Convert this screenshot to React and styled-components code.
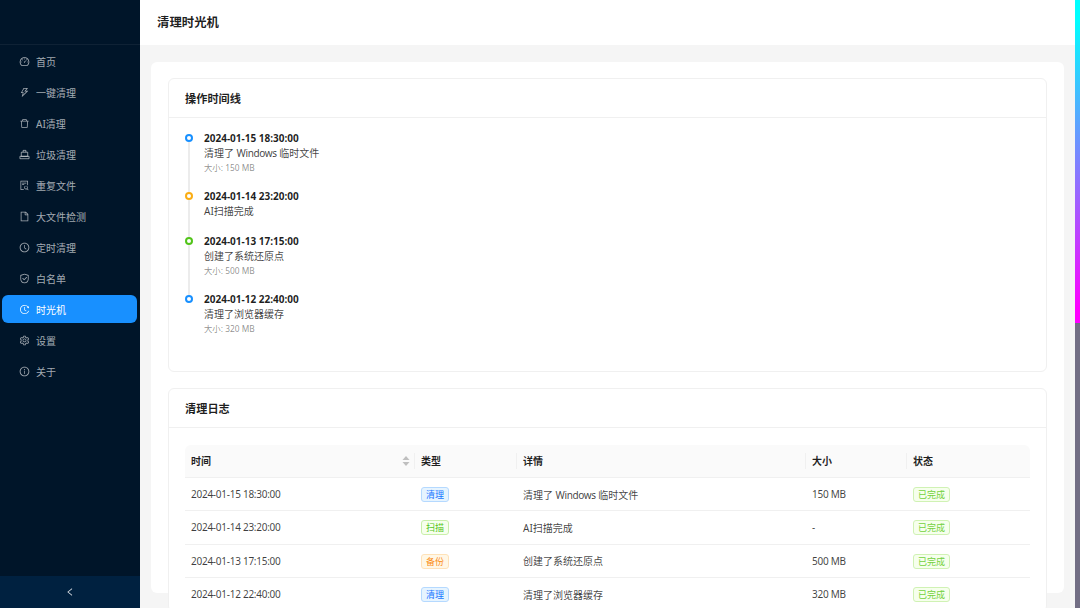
import React from "react";
import styled, { createGlobalStyle } from "styled-components";
import {
  AiOutlineDashboard,
  AiOutlineThunderbolt,
  AiOutlineDelete,
  AiOutlineFileSearch,
  AiOutlineFile,
  AiOutlineClockCircle,
  AiOutlineSafety,
  AiOutlineHistory,
  AiOutlineSetting,
  AiOutlineInfoCircle,
  AiOutlineLeft,
} from "react-icons/ai";

const GlobalStyle = createGlobalStyle`
  html, body {
    margin: 0;
    padding: 0;
    height: 100%;
    overflow: hidden;
  }
  body {
    font-family: "Noto Sans", "Noto Sans CJK SC", sans-serif;
    font-size: 10px;
    color: rgba(0, 0, 0, 0.88);
    background: #f5f5f5;
  }
`;

const Shell = styled.div`
  display: flex;
  width: 1080px;
  height: 608px;
  overflow: hidden;
`;

const Sidebar = styled.aside`
  width: 140px;
  flex: none;
  display: flex;
  flex-direction: column;
  background: #001529;
`;

const LogoArea = styled.div`
  height: 44px;
  border-bottom: 1px solid rgba(255, 255, 255, 0.06);
`;

const Menu = styled.nav`
  flex: 1;
  display: flex;
  flex-direction: column;
  gap: 3px;
  padding: 2px 3px 0 2px;
`;

const MenuItem = styled.div`
  height: 28px;
  display: flex;
  align-items: center;
  gap: 6px;
  padding-left: 17px;
  border-radius: 6px;
  font-size: 10px;
  color: ${(props) => (props.$active ? "#fff" : "rgba(255, 255, 255, 0.65)")};
  background: ${(props) => (props.$active ? "#1890ff" : "transparent")};
  svg {
    width: 11px;
    height: 11px;
    flex: none;
  }
`;

const Collapse = styled.div`
  height: 32px;
  display: flex;
  align-items: center;
  justify-content: center;
  background: #002140;
  color: rgba(255, 255, 255, 0.85);
  svg {
    width: 10px;
    height: 10px;
  }
`;

const Main = styled.main`
  flex: 1;
  min-width: 0;
  display: flex;
  flex-direction: column;
`;

const Header = styled.header`
  height: 45px;
  flex: none;
  display: flex;
  align-items: center;
  padding: 0 0 1px 17px;
  box-sizing: border-box;
  background: #fff;
  font-size: 12.4px;
  font-weight: 600;
`;

const Content = styled.div`
  flex: 1;
  padding: 17px 11px 15px;
`;

const Panel = styled.div`
  height: 531px;
  box-sizing: border-box;
  padding: 16px 17px 0;
  display: flex;
  flex-direction: column;
  gap: 16px;
  background: #fff;
  border-radius: 6px;
`;

const Card = styled.section`
  flex: none;
  background: #fff;
  border: 1px solid #f0f0f0;
  border-radius: 6px;
`;

const CardTitle = styled.h2`
  margin: 0;
  height: 38px;
  display: flex;
  align-items: center;
  padding-left: 16px;
  border-bottom: 1px solid #f0f0f0;
  font-size: 11.2px;
  font-weight: 600;
`;

const TimelineBody = styled.div`
  height: 253px;
  box-sizing: border-box;
  padding: 13px 16px 0;
`;

const TimelineRow = styled.div`
  position: relative;
  padding: 0 0 15px 19px;
  &::before {
    content: "";
    display: ${(props) => (props.$last ? "none" : "block")};
    position: absolute;
    left: 3px;
    top: 11px;
    bottom: -3px;
    width: 2px;
    background: #ececec;
  }
`;

const Dot = styled.span`
  position: absolute;
  left: 0;
  top: 3px;
  width: 8px;
  height: 8px;
  box-sizing: border-box;
  border-radius: 50%;
  background: #fff;
  border: 2px solid ${(props) => props.$color};
`;

const EventTime = styled.div`
  height: 15px;
  line-height: 15px;
  font-weight: 700;
`;

const EventText = styled.div`
  height: 15px;
  line-height: 15px;
  color: rgba(0, 0, 0, 0.75);
`;

const EventSize = styled.div`
  height: 13px;
  line-height: 13px;
  font-size: 8.4px;
  color: rgba(0, 0, 0, 0.45);
`;

const Latin = styled.span`
  letter-spacing: -0.4px;
`;

const TableBody = styled.div`
  padding: 17px 16px 0;
`;

const Table = styled.table`
  width: 845px;
  table-layout: fixed;
  border-collapse: separate;
  border-spacing: 0;
`;

const Th = styled.th`
  position: relative;
  height: 30px;
  padding: 0 6px 2px;
  text-align: left;
  font-weight: 600;
  background: #fafafa;
  border-bottom: 1px solid #f0f0f0;
  &:first-child {
    border-top-left-radius: 6px;
  }
  &:last-child {
    border-top-right-radius: 6px;
  }
  &:not(:last-child)::after {
    content: "";
    position: absolute;
    right: 0;
    top: 8px;
    height: 16px;
    width: 1px;
    background: #f0f0f0;
  }
`;

const SortIcon = styled.svg`
  position: absolute;
  right: 5px;
  top: 10px;
  width: 8px;
  height: 12px;
  fill: #bfbfbf;
`;

const Td = styled.td`
  height: 33.33px;
  box-sizing: border-box;
  padding: 0 6px;
  color: rgba(0, 0, 0, 0.75);
  border-bottom: 1px solid #f0f0f0;
  letter-spacing: ${(props) => (props.$tight ? "-0.26px" : "normal")};
`;

const tagColors = {
  blue: ["#e6f4ff", "#b5d9ff", "#1677ff"],
  green: ["#f6ffed", "#c9efaa", "#52c41a"],
  done: ["#f6ffed", "#d0f2b4", "#73d13d"],
  orange: ["#fff7e6", "#ffe2b8", "#fa8c16"],
};

const Tag = styled.span`
  display: inline-block;
  box-sizing: border-box;
  height: 15px;
  line-height: 13px;
  padding: 0 4px;
  font-size: 9px;
  vertical-align: middle;
  border-radius: 3px;
  background: ${(props) => tagColors[props.$tone][0]};
  border: 1px solid ${(props) => tagColors[props.$tone][1]};
  color: ${(props) => tagColors[props.$tone][2]};
`;

const Scrollbar = styled.div`
  width: 5px;
  flex: none;
  background: #726e84;
`;

const ScrollThumb = styled.div`
  height: 323px;
  background: linear-gradient(180deg, #00ffff 0%, #00ffff 6%, #ff00ff 96%);
`;

const RestIcon = () => (
  <svg viewBox="0 0 12 12" fill="none" stroke="currentColor" strokeWidth="0.9">
    <path d="M4.5 3.5V1.5h3v2" />
    <path d="M2.5 3.5h7v4.5h-7z" />
    <path d="M1 8h10v2.6H1z" />
  </svg>
);

const menuItems = [
  ["首页", AiOutlineDashboard],
  ["一键清理", AiOutlineThunderbolt],
  ["AI清理", AiOutlineDelete],
  ["垃圾清理", RestIcon],
  ["重复文件", AiOutlineFileSearch],
  ["大文件检测", AiOutlineFile],
  ["定时清理", AiOutlineClockCircle],
  ["白名单", AiOutlineSafety],
  ["时光机", AiOutlineHistory, true],
  ["设置", AiOutlineSetting],
  ["关于", AiOutlineInfoCircle],
];

const windowsText = (
  <>
    清理了 <Latin>Windows</Latin> 临时文件
  </>
);

const events = [
  { time: "2024-01-15 18:30:00", text: windowsText, size: "大小: 150 MB", color: "#1890ff" },
  { time: "2024-01-14 23:20:00", text: "AI扫描完成", color: "#faad14" },
  { time: "2024-01-13 17:15:00", text: "创建了系统还原点", size: "大小: 500 MB", color: "#52c41a" },
  { time: "2024-01-12 22:40:00", text: "清理了浏览器缓存", size: "大小: 320 MB", color: "#1890ff" },
];

const logs = [
  { time: "2024-01-15 18:30:00", type: "清理", tone: "blue", detail: windowsText, size: "150 MB" },
  { time: "2024-01-14 23:20:00", type: "扫描", tone: "green", detail: "AI扫描完成", size: "-" },
  { time: "2024-01-13 17:15:00", type: "备份", tone: "orange", detail: "创建了系统还原点", size: "500 MB" },
  { time: "2024-01-12 22:40:00", type: "清理", tone: "blue", detail: "清理了浏览器缓存", size: "320 MB" },
];

export default function App() {
  return (
    <Shell>
      <GlobalStyle />
      <Sidebar>
        <LogoArea />
        <Menu>
          {menuItems.map(([label, Icon, active]) => (
            <MenuItem key={label} $active={active}>
              <Icon />
              {label}
            </MenuItem>
          ))}
        </Menu>
        <Collapse>
          <AiOutlineLeft />
        </Collapse>
      </Sidebar>
      <Main>
        <Header>清理时光机</Header>
        <Content>
          <Panel>
            <Card>
              <CardTitle>操作时间线</CardTitle>
              <TimelineBody>
                {events.map((e, i) => (
                  <TimelineRow key={e.time} $last={i === events.length - 1}>
                    <Dot $color={e.color} />
                    <EventTime>{e.time}</EventTime>
                    <EventText>{e.text}</EventText>
                    {e.size && <EventSize>{e.size}</EventSize>}
                  </TimelineRow>
                ))}
              </TimelineBody>
            </Card>
            <Card>
              <CardTitle>清理日志</CardTitle>
              <TableBody>
                <Table>
                  <colgroup>
                    <col width="230" />
                    <col width="102" />
                    <col width="289" />
                    <col width="101" />
                    <col width="123" />
                  </colgroup>
                  <thead>
                    <tr>
                      <Th>
                        时间
                        <SortIcon viewBox="0 0 8 12">
                          <path d="M4 1 7.5 5h-7zM4 11 .5 7h7z" />
                        </SortIcon>
                      </Th>
                      <Th>类型</Th>
                      <Th>详情</Th>
                      <Th>大小</Th>
                      <Th>状态</Th>
                    </tr>
                  </thead>
                  <tbody>
                    {logs.map((row) => (
                      <tr key={row.time}>
                        <Td $tight>{row.time}</Td>
                        <Td>
                          <Tag $tone={row.tone}>{row.type}</Tag>
                        </Td>
                        <Td>{row.detail}</Td>
                        <Td $tight>{row.size}</Td>
                        <Td>
                          <Tag $tone="done">已完成</Tag>
                        </Td>
                      </tr>
                    ))}
                  </tbody>
                </Table>
              </TableBody>
            </Card>
          </Panel>
        </Content>
      </Main>
      <Scrollbar>
        <ScrollThumb />
      </Scrollbar>
    </Shell>
  );
}
